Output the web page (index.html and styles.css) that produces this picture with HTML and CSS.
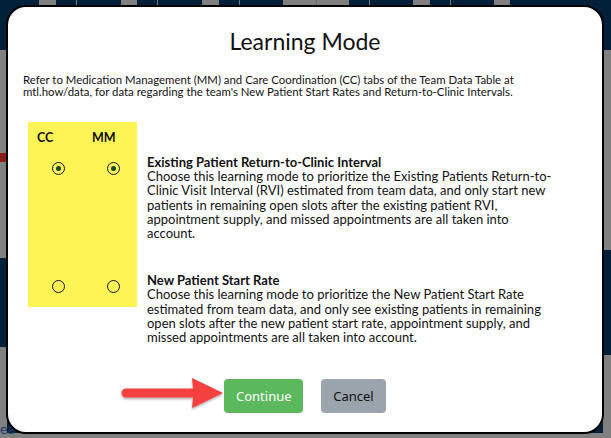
FILE: index.html
```html
<!DOCTYPE html>
<html>
<head>
<meta charset="utf-8">
<link rel="stylesheet" href="styles.css">
</head>
<body>
<div class="backdrop-text">ea</div>
<div class="modal">
  <h1 class="title">Learning Mode</h1>
  <p class="intro">Refer to Medication Management (MM) and Care Coordination (CC) tabs of the Team Data Table at<br>mtl.how/data, for data regarding the team's New Patient Start Rates and Return-to-Clinic Intervals.</p>
  <div class="modes">
    <div class="picker">
      <div class="labels"><span>CC</span><span>MM</span></div>
      <div class="radios first"><span class="radio checked"></span><span class="radio checked"></span></div>
      <div class="radios second"><span class="radio"></span><span class="radio"></span></div>
    </div>
    <div class="descs">
      <div class="desc">
        <div class="desc-title">Existing Patient Return-to-Clinic Interval</div>
        <div>Choose this learning mode to prioritize the Existing Patients Return-to-<br>Clinic Visit Interval (RVI) estimated from team data, and only start new<br>patients in remaining open slots after the existing patient RVI,<br>appointment supply, and missed appointments are all taken into<br>account.</div>
      </div>
      <div class="desc second-desc">
        <div class="desc-title">New Patient Start Rate</div>
        <div>Choose this learning mode to prioritize the New Patient Start Rate<br>estimated from team data, and only see existing patients in remaining<br>open slots after the new patient start rate, appointment supply, and<br>missed appointments are all taken into account.</div>
      </div>
    </div>
  </div>
  <div class="actions">
    <svg class="arrow" width="106" height="36" viewBox="0 0 106 36">
      <defs>
        <filter id="sh" x="-10%" y="-20%" width="120%" height="150%">
          <feDropShadow dx="0" dy="1.5" stdDeviation="1.2" flood-color="#000" flood-opacity="0.35"/>
        </filter>
      </defs>
      <path d="M6 12.5 H73 L72 2 L103 17 L72 32 L73 21.5 H6 A4.5 4.5 0 0 1 6 12.5 Z" fill="#f53f3f" filter="url(#sh)"/>
    </svg>
    <button class="btn btn-continue">Continue</button>
    <button class="btn btn-cancel">Cancel</button>
  </div>
</div>
</body>
</html>
```
FILE: styles.css
```css
html, body {
  margin: 0;
  height: 438px;
  overflow: hidden;
}
body {
  position: relative;
  box-sizing: border-box;
  padding: 5px 7px 4px 6px;
  font-family: "Lato", "Open Sans", sans-serif;
  color: #111;
  background-color: #03203a;
  background-image:
    linear-gradient(#808080, #808080),
    linear-gradient(to bottom, #03203a 0 50px, #808080 50px 153px, #8a1c1c 153px 162px, #808080 162px 258px, #03203a 258px 347px, #808080 347px 438px),
    linear-gradient(to bottom, #03203a 0 50px, #808080 50px 250px, #03203a 250px 355px, #808080 355px 438px),
    linear-gradient(to right, #03203a 0 39px, #808080 39px 56px, #03203a 56px 76px, #6d7a86 76px 77px, #03203a 77px 121px, #808080 121px 137px, #03203a 137px 157px, #6d7a86 157px 158px, #03203a 158px 202px, #808080 202px 219px, #03203a 219px 239px, #6d7a86 239px 240px, #03203a 240px 283px, #808080 283px 316px, #6a6a6a 316px 317px, #808080 317px 349px, #03203a 349px 369px, #6d7a86 369px 370px, #03203a 370px 413px, #808080 413px 430px, #03203a 430px 450px, #6d7a86 450px 451px, #03203a 451px 494px, #808080 494px 510px, #03203a 510px 611px);
  background-size: 611px 5px, 7px 438px, 8px 438px, 611px 5px;
  background-position: 0 433px, 0 0, 603px 0, 0 0;
  background-repeat: no-repeat;
}
.backdrop-text {
  position: absolute;
  left: 0;
  top: 421px;
  font-size: 14px;
  line-height: 16px;
  color: #1d3e6b;
  font-family: "Lato", sans-serif;
}
.modal {
  position: relative;
  box-sizing: border-box;
  height: 429px;
  background: #fff;
  border: 2px solid #000;
  border-radius: 20px;
  display: flex;
  flex-direction: column;
}
.title {
  margin: 20px 0 0;
  text-align: center;
  font-weight: 400;
  font-size: 23px;
  line-height: 28px;
  color: #111;
}
.intro {
  margin: 19px 0 0 15px;
  font-size: 11.4px;
  line-height: 11.5px;
}
.modes {
  display: flex;
  margin: 25px 0 0 20px;
  gap: 10px;
}
.picker {
  width: 109px;
  height: 185px;
  background: #fff455;
  box-sizing: border-box;
  padding-top: 8px;
}
.labels, .radios {
  display: grid;
  grid-template-columns: 55px 55px;
}
.labels {
  padding-left: 9px;
  font-size: 12.5px;
  line-height: 16px;
  font-weight: 700;
}
.radios {
  padding-left: 24px;
}
.radios.first { margin-top: 16px; }
.radios.second { margin-top: 105px; }
.radio {
  box-sizing: border-box;
  width: 13px;
  height: 13px;
  border: 1.5px solid #111;
  border-radius: 50%;
  display: flex;
  align-items: center;
  justify-content: center;
}
.radio.checked::after {
  content: "";
  width: 5.5px;
  height: 5.5px;
  border-radius: 50%;
  background: #0b4a2c;
}
.descs {
  padding-top: 33px;
  font-size: 13px;
  line-height: 14.2px;
}
.desc-title {
  font-weight: 700;
}
.second-desc {
  margin-top: 33px;
}
.actions {
  position: relative;
  margin-top: auto;
  margin-bottom: 19px;
  display: flex;
  justify-content: center;
  gap: 18px;
}
.btn {
  height: 34px;
  border: none;
  border-radius: 4px;
  font-family: "Noto Sans", "Open Sans", sans-serif;
  font-size: 13px;
  padding: 0 12px;
}
.btn-continue {
  width: 79px;
  background: #5cb85c;
  color: #fff;
}
.btn-cancel {
  width: 65px;
  background: #9ba4ad;
  color: #111;
}
.arrow {
  position: absolute;
  left: 112px;
  top: -3px;
}
```
